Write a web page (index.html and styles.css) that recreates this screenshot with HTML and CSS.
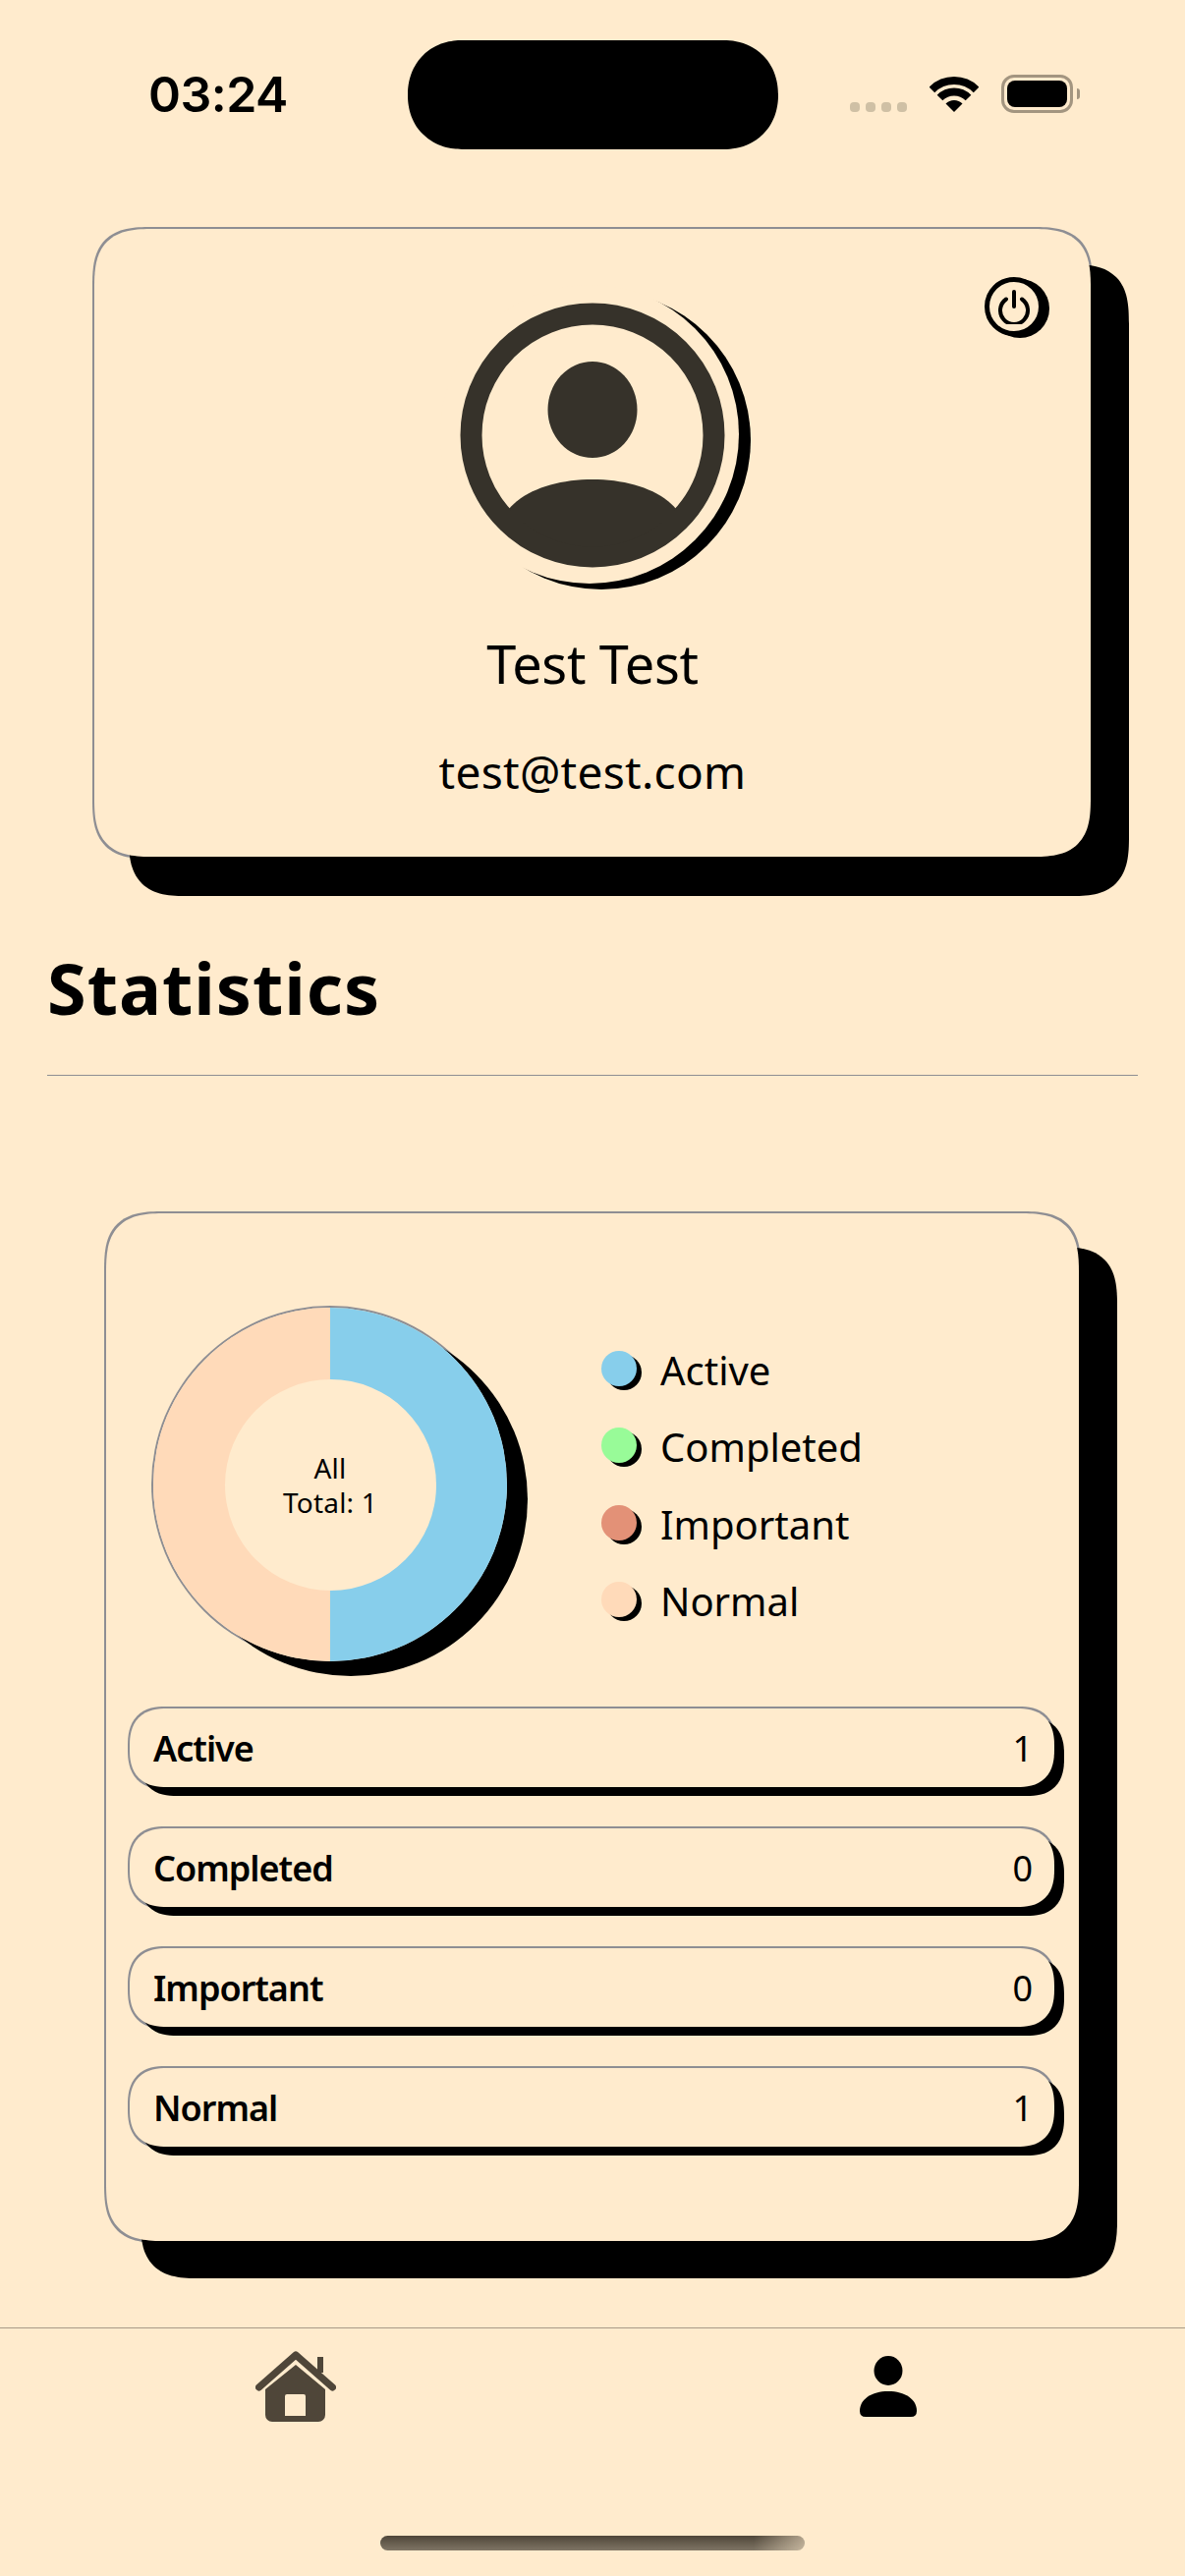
FILE: index.html
```html
<!DOCTYPE html>
<html lang="en">
<head>
    <meta charset="UTF-8">
    <meta name="viewport" content="width=device-width, initial-scale=1.0">
    <title>Profile</title>
    <link rel="stylesheet" href="styles.css">
</head>
<body>

<div class="screen">
    <div class="statusBar">
        <div class="time">03:24</div>
        <div class="island"></div>
        <div class="statusIcons">
            <div class="signal"><span></span><span></span><span></span><span></span></div>
            <svg class="wifi" width="50" height="38" viewBox="0 0 50 38">
                <path d="M2.4 14.4A32 32 0 0 1 47.6 14.4" fill="none" stroke="#000" stroke-width="8"/>
                <path d="M10.5 22.5A20.5 20.5 0 0 1 39.5 22.5" fill="none" stroke="#000" stroke-width="8"/>
                <path d="M25 37L16.5 28.5A12 12 0 0 1 33.5 28.5Z" fill="#000"/>
            </svg>
            <div class="battery"><div class="batteryLevel"></div></div>
            <div class="batteryCap"></div>
        </div>
    </div>

    <div class="profileCard">
        <div class="powerButton">
            <svg width="34" height="36" viewBox="0 0 34 36">
                <path d="M9 10.5A14 14 0 1 0 25 10.5" fill="none" stroke="#000" stroke-width="4" stroke-linecap="round"/>
                <path d="M17 3V18" fill="none" stroke="#000" stroke-width="4" stroke-linecap="round"/>
            </svg>
        </div>
        <svg class="avatar" width="350" height="340" viewBox="0 0 350 340">
            <circle cx="184" cy="173" r="152" fill="#000"/>
            <circle cx="172" cy="167" r="152" fill="#ffebcd"/>
            <circle cx="175" cy="168" r="123.5" fill="none" stroke="#36322a" stroke-width="22"/>
            <ellipse cx="175" cy="142" rx="45.5" ry="49" fill="#36322a"/>
            <path d="M90 243C107 223 140 213 175 213C210 213 243 223 260 243A113 113 0 0 1 90 243Z" fill="#36322a"/>
        </svg>
        <div class="userName">Test Test</div>
        <div class="userEmail">test@test.com</div>
    </div>

    <h1 class="sectionTitle">Statistics</h1>

    <div class="statsCard">
        <div class="chartRow">
            <div class="donut">
                <div class="donutHole">
                    <div>All</div>
                    <div>Total: 1</div>
                </div>
            </div>
            <div class="legend">
                <div class="legendItem"><span class="dot activeDot"></span>Active</div>
                <div class="legendItem"><span class="dot completedDot"></span>Completed</div>
                <div class="legendItem"><span class="dot importantDot"></span>Important</div>
                <div class="legendItem"><span class="dot normalDot"></span>Normal</div>
            </div>
        </div>
        <div class="statRows">
            <div class="statRow"><b>Active</b><span>1</span></div>
            <div class="statRow"><b>Completed</b><span>0</span></div>
            <div class="statRow"><b>Important</b><span>0</span></div>
            <div class="statRow"><b>Normal</b><span>1</span></div>
        </div>
    </div>

    <div class="tabBar">
        <svg class="homeIcon" width="82" height="72" viewBox="0 0 82 72">
            <path d="M63 6h6v16h-6z" fill="#4f4639"/>
            <path d="M3.5 37L41 4L78.5 37" fill="none" stroke="#4f4639" stroke-width="7" stroke-linecap="round" stroke-linejoin="round"/>
            <path fill-rule="evenodd" d="M41 14L71 39V65a7 7 0 0 1-7 7H17a7 7 0 0 1-7-7V39ZM32 44a2 2 0 0 0-2 2V66H51V46a2 2 0 0 0-2-2Z" fill="#4f4639"/>
        </svg>
        <svg class="personIcon" width="58" height="62" viewBox="0 0 58 62">
            <ellipse cx="29" cy="15" rx="14.5" ry="15" fill="#000"/>
            <path d="M0 56C0 44 12 36 29 36S58 44 58 56Q58 62 52 62H6Q0 62 0 56Z" fill="#000"/>
        </svg>
    </div>
    <div class="homeIndicator"></div>
</div>

</body>
</html>
```

FILE: styles.css
```css
body {
    margin: 0;
    background-color: #ffebcd;
    color: #000;
    font-family: "Noto Sans", Roboto, sans-serif;
}
.screen {
    width: 1206px;
    height: 2622px;
    overflow: hidden;
}
.statusBar {
    display: grid;
    grid-template-columns: 415px 377px 1fr;
    height: 233px;
    box-sizing: border-box;
    padding-top: 41px;
}
.time {
    padding: 25px 0 0 151px;
    font-family: Inter, sans-serif;
    font-size: 50px;
    font-weight: 600;
    letter-spacing: -0.5px;
    line-height: 60px;
}
.island {
    height: 111px;
    border-radius: 55px;
    corner-shape: superellipse(1.08);
    background-color: #000;
}
.statusIcons {
    display: flex;
    align-items: flex-start;
    padding: 35px 0 0 73px;
}
.signal {
    display: flex;
    gap: 6px;
    margin: 28px 23px 0 0;
}
.signal span {
    width: 10px;
    height: 10px;
    border-radius: 4px;
    background-color: #cfc0a5;
}
.wifi {
    margin: 1px 23px 0 0;
}
.battery {
    width: 73px;
    height: 39px;
    box-sizing: border-box;
    padding: 3px;
    border: 3px solid #a39580;
    border-radius: 13px;
}
.batteryLevel {
    height: 100%;
    border-radius: 8px;
    background-color: #000;
}
.batteryCap {
    width: 3px;
    height: 11px;
    margin: 14px 0 0 4px;
    border-radius: 0 3px 3px 0;
    background-color: #a39580;
}

.profileCard {
    position: relative;
    display: flex;
    flex-direction: column;
    align-items: center;
    width: 1014px;
    height: 639px;
    margin-left: 96px;
    box-sizing: border-box;
    padding-top: 42px;
    border-radius: 60px;
    corner-shape: superellipse(1.5);
    background-color: #ffebcd;
    /* black sits on top so the grey ring only shows on the top and left */
    box-shadow: 37px 38px 0 2px #000, 0 0 0 2px #8e8e93;
}
.powerButton {
    position: absolute;
    top: 49px;
    right: 48px;
    display: flex;
    align-items: center;
    justify-content: center;
    width: 60px;
    height: 60px;
    box-sizing: border-box;
    border: 5px solid #000;
    border-radius: 50%;
    background-color: #ffebcd;
    box-shadow: 6px 2px 0 #000;
}
.userName {
    margin-top: 25px;
    font-size: 54px;
    letter-spacing: -0.3px;
    line-height: 70px;
}
.userEmail {
    margin-top: 40px;
    font-size: 46px;
    letter-spacing: 0.3px;
    line-height: 70px;
}

.sectionTitle {
    margin: 88px 48px 0;
    padding-bottom: 44px;
    border-bottom: 1px solid #8e8e93;
    font-size: 72px;
    font-weight: 700;
    letter-spacing: 1px;
    line-height: 90px;
}

.statsCard {
    width: 990px;
    height: 1046px;
    margin: 140px 0 0 108px;
    box-sizing: border-box;
    padding: 96px 25px 0 24px;
    border-radius: 60px;
    corner-shape: superellipse(1.5);
    background-color: #ffebcd;
    box-shadow: 37px 36px 0 2px #000, 0 0 0 2px #8e8e93;
}
.chartRow {
    display: flex;
    align-items: center;
    gap: 96px;
    padding-left: 24px;
}
.donut {
    display: flex;
    align-items: center;
    justify-content: center;
    flex-shrink: 0;
    width: 360px;
    height: 360px;
    border-radius: 50%;
    background: conic-gradient(#87ceeb 0 50%, #ffdab9 50% 100%);
    box-shadow: 21px 15px 0 #000, 0 0 0 2px #8e8e93;
}
.donutHole {
    display: flex;
    flex-direction: column;
    align-items: center;
    justify-content: center;
    width: 215px;
    height: 215px;
    padding-top: 2px;
    box-sizing: border-box;
    border-radius: 50%;
    background-color: #ffebcd;
    font-size: 28px;
    letter-spacing: 0.2px;
    line-height: 35px;
}
.legend {
    margin-top: 2px;
}
.legendItem {
    display: flex;
    align-items: center;
    gap: 24px;
    height: 78.4px;
    font-size: 40px;
}
.dot {
    width: 36px;
    height: 36px;
    margin-bottom: 3px;
    border-radius: 50%;
    box-shadow: 5px 4px 0 #000;
}
.activeDot { background-color: #87ceeb; }
.completedDot { background-color: #98fb98; }
.importantDot { background-color: #e39177; }
.normalDot { background-color: #ffdab9; }

.statRows {
    display: flex;
    flex-direction: column;
    gap: 42px;
    margin-top: 48px;
}
.statRow {
    display: flex;
    align-items: center;
    justify-content: space-between;
    height: 80px;
    padding: 0 22px 0 24px;
    border-radius: 38px;
    corner-shape: superellipse(1.3);
    background-color: #ffebcd;
    box-shadow: 10px 9px 0 #000, 0 0 0 2px #8e8e93;
    font-size: 36px;
}
.statRow b {
    font-weight: 600;
    letter-spacing: -1px;
}

.tabBar {
    display: grid;
    grid-template-columns: 1fr 1fr;
    justify-items: center;
    align-items: start;
    height: 149px;
    margin-top: 88px;
    box-sizing: border-box;
    padding: 23px 3px 0 0;
    border-top: 1px solid #a89b88;
}
.personIcon {
    margin: 5px 0 0 3px;
}
.homeIndicator {
    width: 432px;
    height: 15px;
    margin: 63px 0 0 387px;
    border-radius: 8px;
    background: linear-gradient(to right, transparent 88%, rgba(255, 235, 205, 0.55)), linear-gradient(to bottom, #4f4639, #7f7565);
}
```
